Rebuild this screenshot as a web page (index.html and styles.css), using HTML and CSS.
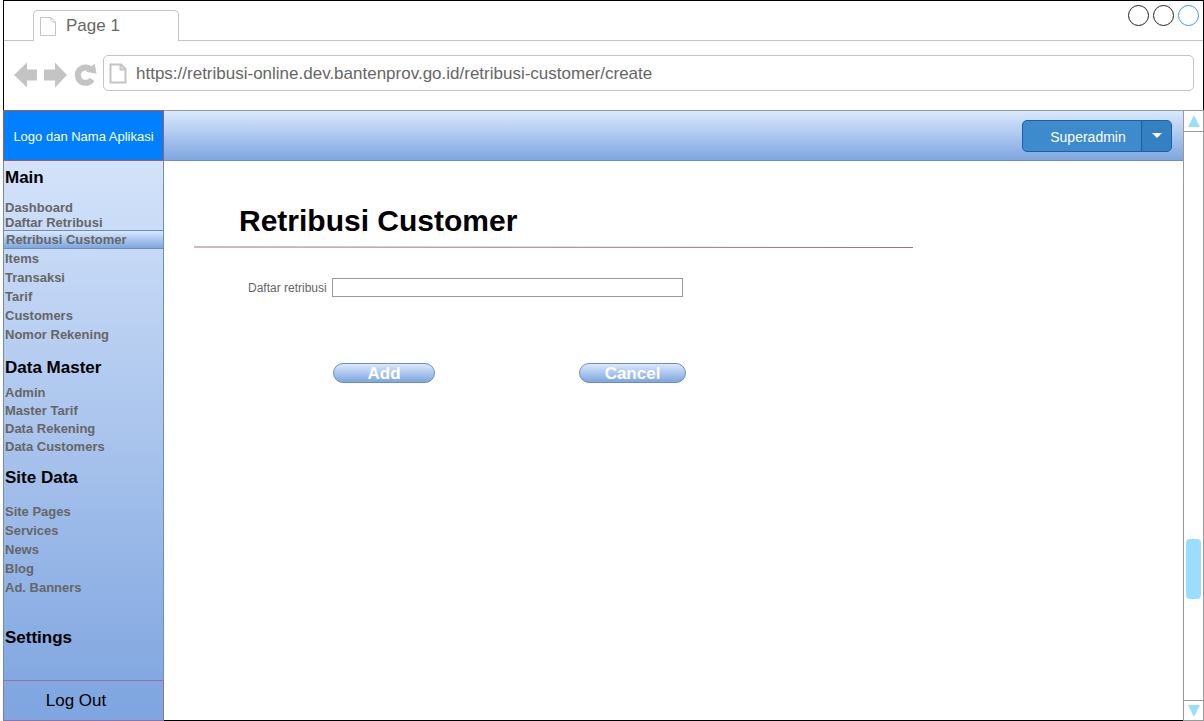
FILE: index.html
```html
<!DOCTYPE html>
<html lang="id">
<head>
<meta charset="utf-8">
<title>Retribusi Customer</title>
<link rel="stylesheet" href="styles.css">
</head>
<body>
<div class="window">
  <div class="tabs">
    <div class="tab">
      <svg width="16" height="19" viewBox="0 0 16 19"><path d="M.5.5h10.500l4.500 4.500v13.500H.5zM11 .5v3l1.500 1.500h3" fill="#fff" stroke="#c4c4c4"/></svg>
      <span>Page 1</span>
    </div>
    <div class="window-controls">
      <button class="dot" aria-label="Minimize"></button>
      <button class="dot" aria-label="Maximize"></button>
      <button class="dot dot-close" aria-label="Close"></button>
    </div>
  </div>
  <div class="toolbar">
    <button class="nav-button" aria-label="Back"><svg width="23" height="26" viewBox="0 0 23 26"><path d="M0 13 13 0.500v7h10v11H13v7z" fill="#c4c4c4"/></svg></button>
    <button class="nav-button" aria-label="Forward"><svg width="23" height="26" viewBox="0 0 23 26"><path d="M23 13 11 .5v7H0v11h11v7z" fill="#c4c4c4"/></svg></button>
    <button class="nav-button" aria-label="Reload"><svg class="reload-icon" width="22" height="26" viewBox="0 0 22 26"><path d="M17 7.700A7.700 7.700 0 1 0 18 17.300" fill="none" stroke="#c4c4c4" stroke-width="6"/><path d="M20.700 1.500 22.500 11.700 12 9.800z" fill="#c4c4c4"/></svg></button>
    <label class="address">
      <svg width="18" height="21" viewBox="0 0 18 21"><path d="M1.500 1.500h10.500l4.500 4.500v13.500h-15zM11.500 1.500v5h5" fill="#fff" stroke="#c4c4c4" stroke-width="2"/></svg>
      <input class="address-input" type="text" aria-label="Address" value="https://retribusi-online.dev.bantenprov.go.id/retribusi-customer/create">
    </label>
  </div>
  <div class="page">
    <aside class="sidebar">
      <div class="logo">Logo dan Nama Aplikasi</div>
      <nav class="menu">
        <h2 class="menu-title">Main</h2>
        <ul class="menu-list list-main">
          <li class="compact"><a href="#">Dashboard</a></li>
          <li class="compact"><a href="#">Daftar Retribusi</a></li>
          <li class="active"><a href="#">Retribusi Customer</a></li>
          <li><a href="#">Items</a></li>
          <li><a href="#">Transaksi</a></li>
          <li><a href="#">Tarif</a></li>
          <li><a href="#">Customers</a></li>
          <li><a href="#">Nomor Rekening</a></li>
        </ul>
        <h2 class="menu-title">Data Master</h2>
        <ul class="menu-list list-master">
          <li><a href="#">Admin</a></li>
          <li><a href="#">Master Tarif</a></li>
          <li><a href="#">Data Rekening</a></li>
          <li><a href="#">Data Customers</a></li>
        </ul>
        <h2 class="menu-title">Site Data</h2>
        <ul class="menu-list list-site">
          <li><a href="#">Site Pages</a></li>
          <li><a href="#">Services</a></li>
          <li><a href="#">News</a></li>
          <li><a href="#">Blog</a></li>
          <li><a href="#">Ad. Banners</a></li>
        </ul>
        <h2 class="menu-title">Settings</h2>
      </nav>
      <button class="logout">Log Out</button>
    </aside>
    <div class="content">
      <header class="topbar">
        <div class="user">
          <button class="user-name">Superadmin</button>
          <button class="user-toggle" aria-label="Open user menu"><svg width="10" height="5" viewBox="0 0 10 5"><path d="M0 0h10L5 5z" fill="#fff"/></svg></button>
        </div>
      </header>
      <main class="main">
        <h1 class="title">Retribusi Customer</h1>
        <svg class="rule" width="100%" height="3"><line x1="0" y1="1" x2="100%" y2="1.500" stroke="#a07088"/></svg>
        <form class="form">
          <div class="field">
            <label for="daftar">Daftar retribusi</label>
            <input class="text-input" id="daftar" type="text">
          </div>
          <div class="actions">
            <button class="pill" type="button">Add</button>
            <button class="pill pill-cancel" type="button">Cancel</button>
          </div>
        </form>
      </main>
    </div>
    <div class="scrollbar">
      <button class="scroll-button" aria-label="Scroll up"><svg width="12" height="12" viewBox="0 0 12 12"><path d="M6 0l6 12H0z" fill="#9df"/></svg></button>
      <div class="track"><div class="thumb"></div></div>
      <button class="scroll-button scroll-down" aria-label="Scroll down"><svg width="12" height="12" viewBox="0 0 12 12"><path d="M0 0h12L6 12z" fill="#9df"/></svg></button>
    </div>
  </div>
</div>
</body>
</html>
```
FILE: styles.css
```css
* {
  box-sizing: border-box;
}

body {
  margin: 0;
  background: #fff;
  color: #000;
  font-family: "Liberation Sans", Arial, sans-serif;
}

button,
input {
  margin: 0;
  padding: 0;
  border: 0;
  background: none;
  font: inherit;
}

svg {
  display: block;
}

.window {
  display: flex;
  flex-direction: column;
  min-height: 100vh;
  margin-left: 3px;
  border: 1px solid #000;
}

/* Browser chrome */
.tabs {
  display: flex;
  justify-content: space-between;
  height: 40px;
  padding: 4px 4px 0 29px;
  border-bottom: 1px solid #c4c4c4;
}

.tab {
  display: flex;
  align-items: center;
  gap: 10px;
  width: 146px;
  height: 31px;
  margin-top: 5px;
  padding-left: 6px;
  border: 1px solid #c4c4c4;
  border-bottom: 0;
  border-radius: 5px 5px 0 0;
  background: #fff;
  color: #666;
  font-size: 17px;
}

.window-controls {
  display: flex;
  gap: 4px;
}

.dot {
  width: 21px;
  height: 21px;
  border: 1px solid #222;
  border-radius: 50%;
}

.dot-close {
  border-color: #39f;
}

.toolbar {
  display: flex;
  align-items: center;
  gap: 7px;
  height: 69px;
  padding: 0 9px 2px 10px;
}

.nav-button {
  flex: none;
}

.reload-icon {
  overflow: visible;
}

.address {
  display: flex;
  flex: 1;
  align-items: center;
  gap: 9px;
  height: 36px;
  margin-bottom: 4px;
  padding: 2px 0 0 5px;
  border: 1px solid #c4c4c4;
  border-radius: 5px;
}

.address-input {
  flex: 1;
  color: #666;
  font-size: 17px;
}

/* Page frame */
.page {
  display: flex;
  flex: 1;
  margin: 0 -1px -1px;
}

.sidebar {
  display: flex;
  flex-direction: column;
  width: 161px;
}

.logo {
  display: flex;
  align-items: center;
  justify-content: center;
  height: 51px;
  padding-top: 2px;
  border: 1px solid #b85450;
  background: #007fff;
  color: #fff;
  font-size: 13px;
}

.menu {
  flex: 1;
  padding-top: 7px;
  border: solid #6c8ebf;
  border-width: 0 1px;
  background: linear-gradient(#d4e3fa, #83a8e1);
}

.menu-title {
  margin: 0;
  padding-left: 1px;
  font-size: 17px;
  line-height: 20px;
}

.menu-list {
  margin: 0;
  padding: 0;
  list-style: none;
  font-size: 13px;
  font-weight: bold;
  line-height: 19px;
}

.menu-list a {
  display: block;
  padding-left: 1px;
  color: #666;
  text-decoration: none;
}

.menu-list .compact {
  line-height: 15px;
}

.menu-list .active {
  border: solid #6c8ebf;
  border-width: 1px 0;
  background: linear-gradient(#dae8fc, #7ea6e0);
  line-height: 17px;
}

.menu-list .active a {
  padding-left: 2px;
}

.list-main {
  margin: 12px 0 14px;
}

.list-master {
  margin: 6px 0 12px;
  line-height: 18px;
}

.list-site {
  margin: 14px 0 31px;
}

.logout {
  height: 41px;
  padding-right: 15px;
  border: 1px solid #996f9f;
  background: linear-gradient(#83a8e1, #7ea6e0);
  font-size: 17px;
}

.content {
  flex: 1;
  border-bottom: 1px solid #000;
}

.topbar {
  display: flex;
  align-items: center;
  justify-content: flex-end;
  height: 51px;
  padding-right: 11px;
  border-top: 1px solid #999;
  border-bottom: 1px solid #6c8ebf;
  background: linear-gradient(#dae8fc, #7ea6e0);
}

.user {
  display: flex;
  width: 150px;
  height: 32px;
  border: 1px solid #1a62a5;
  border-radius: 5px;
  background: #3d8bcd;
  color: #fff;
  font-size: 14px;
}

.user-name {
  flex: 1;
  padding: 2px 0 0 12px;
  color: inherit;
}

.user-toggle {
  display: flex;
  align-items: center;
  justify-content: center;
  width: 30px;
  border-left: 1px solid #1a62a5;
  border-radius: 0 4px 4px 0;
  background: #3580c1;
}

/* Form */
.main {
  max-width: 749px;
  padding: 40px 0 0 30px;
}

.title {
  margin: 0;
  padding-left: 45px;
  font-size: 30px;
  line-height: 40px;
}

.rule {
  margin-top: 5px;
}

.form {
  padding: 29px 0 0 54px;
}

.field {
  display: flex;
  align-items: center;
  gap: 5px;
  color: #666;
  font-size: 12px;
}

.text-input {
  width: 351px;
  height: 19px;
  border: 1px solid #999;
}

.actions {
  display: flex;
  gap: 144px;
  margin-top: 66px;
  padding-left: 85px;
}

.pill {
  width: 102px;
  height: 20px;
  padding-top: 1px;
  border: 1px solid #6c8ebf;
  border-radius: 10px;
  background: linear-gradient(#dae8fc, #7ea6e0);
  color: #fff;
  font-size: 17px;
  font-weight: bold;
  line-height: 18px;
}

.pill-cancel {
  width: 107px;
}

/* Scrollbar */
.scrollbar {
  display: flex;
  flex-direction: column;
  width: 21px;
  border: 1px solid #999;
}

.scroll-button {
  display: flex;
  align-items: center;
  justify-content: center;
  height: 21px;
  border-bottom: 1px solid #999;
}

.scroll-down {
  height: 20px;
  border-top: 1px solid #999;
  border-bottom: 0;
}

.track {
  display: flex;
  flex: 1;
  flex-direction: column;
  justify-content: flex-end;
  padding: 0 2px 101px;
}

.thumb {
  height: 60px;
  border-radius: 4px;
  background: #9df;
}
```
